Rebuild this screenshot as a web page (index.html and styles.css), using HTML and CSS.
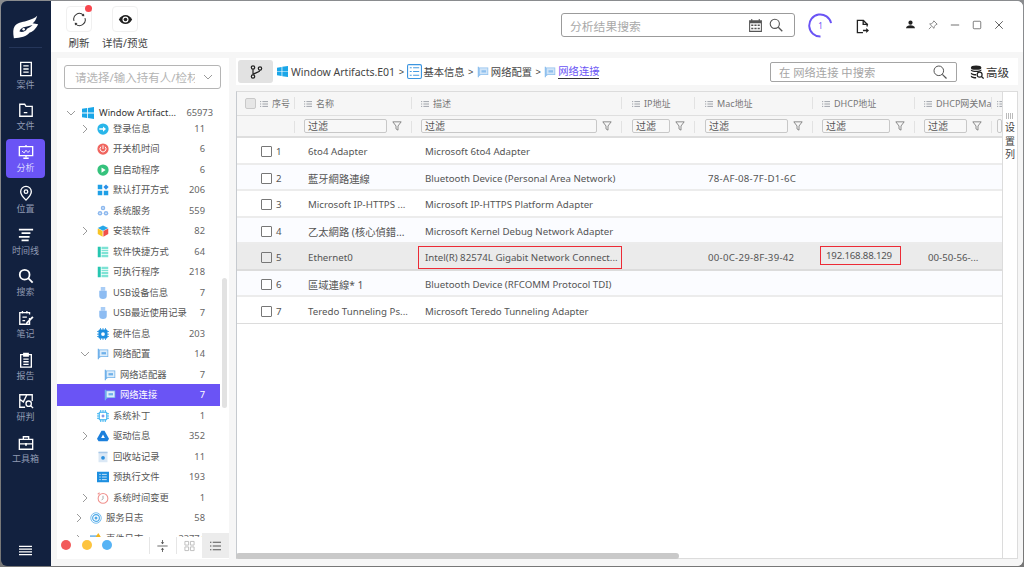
FILE: index.html
```html
<!DOCTYPE html>
<html lang="zh">
<head>
<meta charset="utf-8">
<title>分析</title>
<link rel="stylesheet" href="styles.css">
</head>
<body>
<svg class="defs" width="0" height="0">
<symbol id="win" viewBox="0 0 12 12"><path fill="#1aa6e8" d="M0 1.800 5 1v4.600H0zM5.800.9 12 0v5.600H5.800zM0 6.400h5V11l-5-.8zM5.800 6.400H12V12l-6.200-.9z"/></symbol>
<symbol id="net" viewBox="0 0 16 16"><path fill="#6fb1ea" d="M1 1h1.600v1H15v10H5l-2.400 1.600V15H1z"/><path fill="#dcecfa" d="M3.600 3H14v8H3.600z"/><path fill="#6fb1ea" d="M6 5.500h6v3H6z"/></symbol>
<symbol id="list" viewBox="0 0 16 16"><path fill="#26c6b0" d="M1 1h4v14H1z"/><path fill="#7fe3d5" d="M6 1h9v3H6zM6 5h9v2H6zM6 8h9v3H6zM6 12h9v3H6z"/></symbol>
<symbol id="usb" viewBox="0 0 16 16"><path fill="#a9cdf6" d="M5 0h6v5H5z"/><path fill="#8dbcf2" d="M3 5h10v7a5 4 0 0 1-10 0z"/></symbol>
<symbol id="chev-r" viewBox="0 0 10 10"><path fill="none" stroke="#9a9a9a" d="m3 1 4 4-4 4"/></symbol>
<symbol id="chev-d" viewBox="0 0 10 10"><path fill="none" stroke="#9a9a9a" d="m1 3 4 4 4-4"/></symbol>
<symbol id="lines" viewBox="0 0 10 10"><path fill="none" stroke="#8a8f98" d="M0 2h1.500M3 2h7M0 5h1.500M3 5h7M0 8h1.500M3 8h7"/></symbol>
<symbol id="funnel" viewBox="0 0 12 12"><path fill="none" stroke="#777" d="M1 1h10L7.200 6v5L4.800 9.500V6z"/></symbol>
<symbol id="flagsm" viewBox="0 0 16 16"><path fill="#8fc0ee" d="M1 1h1.600v1H15v10H5l-2.400 1.600V15H1z"/><path fill="#cfe4f8" d="M3.600 3H14v8H3.600z"/><path fill="#8fc0ee" d="M6 5.500h6v3H6z"/></symbol>
</svg>
<div class="app">
  <nav class="rail">
    <svg class="logo" viewBox="0 0 30 30"><path fill="#fff" d="M2 28C1 22 1 18 3 15 7 10 13 11 17 9c4-1 8-3 10-5-1 4-3 7-5 8 2 0 4 1 6 1-3 6-6 8-9 9-3 4-10 6-17 6z"/><path fill="#12213f" d="M8 21c1-4 5-5 8-5.500l6-1.500c-2 2-4 3-6 4-1 3-5 4-8 3z"/><circle cx="12.500" cy="18.500" r="1.400" fill="#fff"/></svg>
    <div class="rail-sep"></div>
    <a class="rail-item"><svg viewBox="0 0 18 18"><path fill="none" stroke="#fff" stroke-width="1.500" d="M3 1.500h12v15H3zM6 5.500h6M6 9h6M6 12.500h6"/></svg><span>案件</span></a>
    <a class="rail-item"><svg viewBox="0 0 18 18"><path fill="none" stroke="#fff" stroke-width="1.500" d="M2 2.500h5.500l1.500 2.500h7v11H2zM6.500 12h4"/></svg><span>文件</span></a>
    <a class="rail-item active"><svg viewBox="0 0 18 18"><path fill="none" stroke="#fff" stroke-width="1.500" d="M1.500 3h15v10h-15zM9 1v2M9 13v2M6 16h6"/><path fill="none" stroke="#fff" d="m4.500 8 2.500 2 2-3 2 2.500 2.500-2"/></svg><span>分析</span></a>
    <a class="rail-item"><svg viewBox="0 0 18 18"><path fill="none" stroke="#fff" stroke-width="1.500" d="M9 17c-3-3-6-6-6-9.500a6 6 0 0 1 12 0C15 11 12 14 9 17z"/><circle cx="9" cy="7.500" r="2" fill="none" stroke="#fff" stroke-width="1.500"/></svg><span>位置</span></a>
    <a class="rail-item"><svg viewBox="0 0 18 18"><path fill="none" stroke="#fff" stroke-width="2" d="M1 3h16M4 7h10M1 11h12M4 15h8"/></svg><span>时间线</span></a>
    <a class="rail-item"><svg viewBox="0 0 18 18"><circle cx="7.500" cy="7.500" r="5.500" fill="none" stroke="#fff" stroke-width="2"/><path stroke="#fff" stroke-width="2" d="m11.500 11.500 5 5"/></svg><span>搜索</span></a>
    <a class="rail-item"><svg viewBox="0 0 18 18"><path fill="none" stroke="#fff" stroke-width="1.500" d="M13 9v7H2V3h11v2M5 1v3M10 1v3M5 8h5M5 12h3"/><path fill="#fff" d="m9 14 7-7 1.500 1.500-7 7L9 16z"/></svg><span>笔记</span></a>
    <a class="rail-item"><svg viewBox="0 0 18 18"><path fill="none" stroke="#fff" stroke-width="1.500" d="M3 3h12v14H3zM6.500 1.500h5v3h-5zM6 8h6M6 11h6M6 14h6"/></svg><span>报告</span></a>
    <a class="rail-item"><svg viewBox="0 0 18 18"><path fill="none" stroke="#fff" stroke-width="1.500" d="M8 16H2V2h14v7M2 7l4 3 4-8"/><circle cx="12" cy="12" r="3" fill="none" stroke="#fff" stroke-width="1.500"/><path stroke="#fff" stroke-width="1.500" d="m14 14 3 3"/></svg><span>研判</span></a>
    <a class="rail-item"><svg viewBox="0 0 18 18"><path fill="none" stroke="#fff" stroke-width="1.500" d="M1.500 5h15v11h-15zM6 5V2h6v3M1.500 10h15"/><path stroke="#fff" stroke-width="2" d="M9 9v3"/></svg><span>工具箱</span></a>
    <svg class="rail-menu" viewBox="0 0 14 11"><path stroke="#fff" stroke-width="1.400" d="M0 1h14M0 4h14M0 7h14M0 10h14"/></svg>
  </nav>
  <div class="main">
    <header class="topbar">
      <div class="tool">
        <span class="tool-btn has-dot"><svg viewBox="0 0 16 16"><path fill="none" stroke="#333" stroke-width="1.100" d="M2.200 9.500A6 6 0 0 1 12 3.200M13.800 6.500A6 6 0 0 1 4 12.800"/><path fill="#333" d="m12.800 1.500.3 3-3-.2zM3.200 14.500l-.3-3 3 .2z"/></svg></span>
        <span class="tool-label">刷新</span>
      </div>
      <div class="tool">
        <span class="tool-btn"><svg viewBox="0 0 18 18"><path fill="#222" d="M1 9c2-3.700 4.800-5.500 8-5.500s6 1.800 8 5.500c-2 3.700-4.800 5.500-8 5.500S3 12.700 1 9z"/><circle cx="9" cy="9" r="3.600" fill="#fff"/><circle cx="9" cy="9" r="2.200" fill="#222"/></svg></span>
        <span class="tool-label">详情/预览</span>
      </div>
      <div class="spacer"></div>
      <label class="global-search">
        <span class="gs-text">分析结果搜索</span>
        <svg class="gs-cal" viewBox="0 0 14 14"><path fill="#555" d="M1 2h2V1h1v1h6V1h1v1h2v11H1z"/><path fill="#fff" d="M2 5h10v7H2z"/><path fill="#555" d="M3 6h2v1.500H3zM6 6h2v1.500H6zM9 6h2v1.500H9zM3 9h2v1.500H3zM6 9h2v1.500H6zM9 9h2v1.500H9z"/></svg>
        <svg class="gs-glass" viewBox="0 0 14 14"><circle cx="5.800" cy="5.800" r="4.600" fill="none" stroke="#555" stroke-width="1.100"/><path stroke="#555" stroke-width="1.300" d="m9.300 9.300 4 4"/></svg>
      </label>
      <div class="progress">
        <svg viewBox="0 0 26 26"><path fill="none" stroke="#6a54f5" stroke-width="2" d="M24 10.500A11.500 11.500 0 1 0 13 24.500"/></svg>
        <span>1</span>
      </div>
      <svg class="export" viewBox="0 0 14 16"><path fill="none" stroke="#222" stroke-width="1.400" d="M7.500 14.500H1.500v-13h6.500l4 4V8"/><path fill="#222" d="M7 1h1.500v4H13v1.500H7zM7.500 11.500H11V9.500l3 2.800-3 2.700v-2H7.500z"/></svg>
      <svg class="win-ic user" viewBox="0 0 12 12"><circle cx="6" cy="3.500" r="2.800" fill="#222"/><path fill="#222" d="M0 11c.5-3 3-4 6-4s5.500 1 6 4z"/></svg>
      <svg class="win-ic pin" viewBox="0 0 12 12"><path fill="none" stroke="#666" stroke-width=".9" d="m7 1 4 4-1.500.5L7.500 8l-.3 2L2 4.800l2-.3 2.500-2zM4 8l-3 3"/></svg>
      <svg class="win-ic min" viewBox="0 0 12 12"><path stroke="#555" d="M1 6h10"/></svg>
      <svg class="win-ic max" viewBox="0 0 12 12"><rect x="1.500" y="1.500" width="9" height="9" rx="1" fill="none" stroke="#666"/></svg>
      <svg class="win-ic close" viewBox="0 0 12 12"><path stroke="#444" d="m1.500 1.500 9 9M10.500 1.500l-9 9"/></svg>
    </header>
    <div class="content">
      <aside class="side">
        <div class="holder"><span class="holder-text">请选择/输入持有人/检材</span><svg viewBox="0 0 10 10"><use href="#chev-d"/></svg></div>
        <div class="tree">
          <div class="row l1"><svg class="arr"><use href="#chev-d"/></svg><svg class="ic"><use href="#win"/></svg><span class="nm root">Window Artifact...</span><span class="ct root-ct">65973</span></div>
          <div class="row l2"><svg class="arr"><use href="#chev-r"/></svg><svg class="ic" viewBox="0 0 16 16"><circle cx="8" cy="8" r="7.500" fill="#29b6ea"/><path fill="#fff" d="M3 7h5V4.500L12 8l-4 3.500V9H3z"/></svg><span class="nm">登录信息</span><span class="ct">11</span></div>
          <div class="row l2"><i class="arr"></i><svg class="ic" viewBox="0 0 16 16"><circle cx="8" cy="8" r="7.500" fill="#f0655f"/><path fill="none" stroke="#fff" stroke-width="1.300" d="M5.200 5a4 4 0 1 0 5.600 0M8 3v5"/></svg><span class="nm">开关机时间</span><span class="ct">6</span></div>
          <div class="row l2"><i class="arr"></i><svg class="ic" viewBox="0 0 16 16"><circle cx="8" cy="8" r="7.500" fill="#35c27c"/><path fill="#fff" d="M6 4.500 11.500 8 6 11.500z"/></svg><span class="nm">自启动程序</span><span class="ct">6</span></div>
          <div class="row l2"><i class="arr"></i><svg class="ic" viewBox="0 0 16 16"><path fill="#1d9fe6" d="M1 1h6v6H1zM1 9h6v6H1zM9 9h6v6H9z"/><path fill="#2c8fe8" d="m12 .5 3.500 3.500-3.500 3.500L8.500 4z"/></svg><span class="nm">默认打开方式</span><span class="ct">206</span></div>
          <div class="row l2"><i class="arr"></i><svg class="ic" viewBox="0 0 16 16"><g fill="#8cb8ee"><circle cx="8" cy="4" r="3"/><circle cx="4" cy="11" r="3"/><circle cx="12" cy="11" r="3"/></g><g fill="#fff"><circle cx="8" cy="4" r="1"/><circle cx="4" cy="11" r="1"/><circle cx="12" cy="11" r="1"/></g></svg><span class="nm">系统服务</span><span class="ct">559</span></div>
          <div class="row l2"><svg class="arr"><use href="#chev-r"/></svg><svg class="ic" viewBox="0 0 16 16"><path fill="#28a7e8" d="m8 .5 7 3.500L8 7.500 1 4z"/><path fill="#f7c325" d="M1 4.500 7.500 8v7.500L1 12z"/><path fill="#f0504a" d="M15 4.500 8.500 8v7.500L15 12z"/></svg><span class="nm">安装软件</span><span class="ct">82</span></div>
          <div class="row l2"><i class="arr"></i><svg class="ic"><use href="#list"/></svg><span class="nm">软件快捷方式</span><span class="ct">64</span></div>
          <div class="row l2"><i class="arr"></i><svg class="ic"><use href="#list"/></svg><span class="nm">可执行程序</span><span class="ct">218</span></div>
          <div class="row l2"><i class="arr"></i><svg class="ic"><use href="#usb"/></svg><span class="nm">USB设备信息</span><span class="ct">7</span></div>
          <div class="row l2"><i class="arr"></i><svg class="ic"><use href="#usb"/></svg><span class="nm">USB最近使用记录</span><span class="ct">7</span></div>
          <div class="row l2"><i class="arr"></i><svg class="ic" viewBox="0 0 16 16"><path fill="#1d8fe0" d="M3 2h10l1 1v10l-1 1H3l-1-1V3zM4 0h1v2H4zM7.500 0h1v2h-1zM11 0h1v2h-1zM4 14h1v2H4zM7.500 14h1v2h-1zM11 14h1v2h-1zM0 4h2v1H0zM0 7.500h2v1H0zM0 11h2v1H0zM14 4h2v1h-2zM14 7.500h2v1h-2zM14 11h2v1h-2z"/><circle cx="8" cy="8" r="2.500" fill="#fff"/></svg><span class="nm">硬件信息</span><span class="ct">203</span></div>
          <div class="row l2"><svg class="arr"><use href="#chev-d"/></svg><svg class="ic"><use href="#net"/></svg><span class="nm">网络配置</span><span class="ct">14</span></div>
          <div class="row l3"><i class="arr"></i><svg class="ic"><use href="#net"/></svg><span class="nm">网络适配器</span><span class="ct">7</span></div>
          <div class="row l3 selected"><i class="arr"></i><svg class="ic"><use href="#net"/></svg><span class="nm">网络连接</span><span class="ct">7</span></div>
          <div class="row l2"><i class="arr"></i><svg class="ic" viewBox="0 0 16 16"><path fill="none" stroke="#1fa8ee" stroke-width="1.200" d="M3 3h10v10H3zM5 0v3M8 0v3M11 0v3M5 13v3M8 13v3M11 13v3M0 5h3M0 8h3M0 11h3M13 5h3M13 8h3M13 11h3"/><path stroke="#3457d5" d="M8 6v4M6 8h4"/></svg><span class="nm">系统补丁</span><span class="ct">1</span></div>
          <div class="row l2"><svg class="arr"><use href="#chev-r"/></svg><svg class="ic" viewBox="0 0 16 16"><path fill="#1b7fdc" d="M6 1h4l6 10.500L14 15H2L0 11.500z"/><path fill="#fff" d="m8 6 2.500 4.500h-5z"/></svg><span class="nm">驱动信息</span><span class="ct">352</span></div>
          <div class="row l2"><i class="arr"></i><svg class="ic" viewBox="0 0 16 16"><path fill="#dbe8f5" d="M2 1h12v14H2z"/><path fill="#a8c8e8" d="M2 1h12v2H2z"/><circle cx="8" cy="9" r="2.500" fill="#2d8fdd"/></svg><span class="nm">回收站记录</span><span class="ct">11</span></div>
          <div class="row l2"><i class="arr"></i><svg class="ic" viewBox="0 0 16 16"><path fill="#1d8fe0" d="M0 1h16v14H0z"/><path stroke="#fff" d="M3 4.500h2M6.500 4.500h6.500M3 8h2M6.500 8h6.500M3 11.500h2M6.500 11.500h6.500"/></svg><span class="nm">预执行文件</span><span class="ct">193</span></div>
          <div class="row l2"><svg class="arr"><use href="#chev-r"/></svg><svg class="ic clock" viewBox="0 0 16 16"><circle cx="8" cy="8.500" r="6.500" fill="none" stroke="#f0918d" stroke-width="1.400"/><path fill="none" stroke="#888" d="M8 5v4l-2 2"/><path stroke="#f0918d" stroke-width="1.400" d="m1 3 2.500-2"/></svg><span class="nm">系统时间变更</span><span class="ct">1</span></div>
          <div class="row l1b"><svg class="arr"><use href="#chev-r"/></svg><svg class="ic" viewBox="0 0 16 16"><g fill="none" stroke="#4ea9e8"><circle cx="8" cy="8" r="7"/><circle cx="8" cy="8" r="4.500" stroke-width="1.500"/></g><circle cx="8" cy="8" r="2" fill="#4ea9e8"/></svg><span class="nm">服务日志</span><span class="ct">58</span></div>
          <div class="row l1b"><svg class="arr"><use href="#chev-r"/></svg><svg class="ic" viewBox="0 0 16 16"><path fill="#7dbcec" d="M0 3h13v10H0z"/><path fill="#f3b41b" d="m11 0 4.500 7h-9z"/></svg><span class="nm">事件日志</span><span class="ct">33774</span></div>
        </div>
        <div class="thumb"></div>
        <div class="side-foot">
          <i class="dot red"></i><i class="dot yellow"></i><i class="dot blue"></i>
          <span class="foot-btn sep"><svg viewBox="0 0 12 14"><path fill="none" stroke="#555" d="M0 7h12M6 0v4M6 10v4"/><path fill="#555" d="m4 2.500 2 2.500 2-2.500zM4 11.500 6 9l2 2.500z"/></svg></span>
          <span class="foot-btn sep"><svg viewBox="0 0 12 12"><path fill="none" stroke="#bbb" d="M1 1h4v4H1zM7 1h4v4H7zM1 7h4v4H1zM7 7h4v4H7z"/></svg></span>
          <span class="foot-btn on"><svg viewBox="0 0 12 10"><path stroke="#555" stroke-width="1.100" d="M0 1h1.500M3 1h9M0 5h1.500M3 5h9M0 9h1.500M3 9h9"/></svg></span>
        </div>
      </aside>
      <section class="panel">
        <div class="crumbs">
          <span class="branch"><svg viewBox="0 0 14 14"><circle cx="4" cy="2.500" r="1.700" fill="none" stroke="#222" stroke-width="1.200"/><circle cx="4" cy="11.500" r="1.700" fill="none" stroke="#222" stroke-width="1.200"/><circle cx="11" cy="3.500" r="1.700" fill="none" stroke="#222" stroke-width="1.200"/><path fill="none" stroke="#222" stroke-width="1.200" d="M4 4.200v5.600M11 5.200C11 7.500 6 7 4.500 9.500"/></svg></span>
          <svg class="cr-win"><use href="#win"/></svg><span class="cr-text">Window Artifacts.E01</span><span class="cr-sep">&gt;</span>
          <svg class="cr-box" viewBox="0 0 16 16"><rect x=".6" y=".6" width="14.800" height="14.800" rx="1.500" fill="none" stroke="#3b95e0" stroke-width="1.200"/><path stroke="#3b95e0" d="M3 4h2M6.500 4H13M3 8h2M6.500 8H13M3 12h2M6.500 12H13"/></svg><span class="cr-text cjk">基本信息</span><span class="cr-sep">&gt;</span>
          <svg class="cr-net"><use href="#flagsm"/></svg><span class="cr-text cjk">网络配置</span><span class="cr-sep">&gt;</span>
          <svg class="cr-net"><use href="#flagsm"/></svg><span class="cr-current">网络连接</span>
          <span class="spacer"></span>
          <label class="panel-search"><span>在 网络连接 中搜索</span><svg viewBox="0 0 14 14"><circle cx="5.800" cy="5.800" r="4.800" fill="none" stroke="#555"/><path stroke="#555" stroke-width="1.200" d="m9.300 9.300 4.200 4.200"/></svg></label>
          <span class="adv"><svg viewBox="0 0 16 16"><ellipse cx="7" cy="3" rx="6" ry="2.500" fill="#222"/><path fill="#222" d="M1 5c2 2 10 2 12 0v1.500C11 8.500 3 8.500 1 6.500zM1 8.500c1.500 1.300 4 1.800 6 1.700v1.800c-2 0-4.500-.5-6-1.800zM1 12c1.500 1.300 4 1.800 6 1.800v1.700c-2 0-4.500-.5-6-1.800z"/><circle cx="11" cy="11" r="2.800" fill="none" stroke="#222" stroke-width="1.400"/><path stroke="#222" stroke-width="1.500" d="m13 13 2.500 2.500"/></svg>高级</span>
        </div>
        <div class="grid-wrap">
          <div class="grid">
            <div class="gh">
              <div class="c c0"><i class="chk"></i><svg class="ln"><use href="#lines"/></svg>序号</div>
              <div class="c c1"><svg class="ln"><use href="#lines"/></svg>名称</div>
              <div class="c c2"><svg class="ln"><use href="#lines"/></svg>描述</div>
              <div class="c c3"><svg class="ln"><use href="#lines"/></svg>IP地址</div>
              <div class="c c4"><svg class="ln"><use href="#lines"/></svg>Mac地址</div>
              <div class="c c5"><svg class="ln"><use href="#lines"/></svg>DHCP地址</div>
              <div class="c c6"><svg class="ln"><use href="#lines"/></svg><span class="clip">DHCP网关Mac</span></div>
              <div class="c c7"><svg class="ln"><use href="#lines"/></svg></div>
            </div>
            <div class="gf">
              <div class="c c0"></div>
              <div class="c c1"><span class="flt">过滤</span><svg class="fn"><use href="#funnel"/></svg></div>
              <div class="c c2"><span class="flt">过滤</span><svg class="fn"><use href="#funnel"/></svg></div>
              <div class="c c3"><span class="flt">过滤</span><svg class="fn"><use href="#funnel"/></svg></div>
              <div class="c c4"><span class="flt">过滤</span><svg class="fn"><use href="#funnel"/></svg></div>
              <div class="c c5"><span class="flt">过滤</span><svg class="fn"><use href="#funnel"/></svg></div>
              <div class="c c6"><span class="flt">过滤</span><svg class="fn"><use href="#funnel"/></svg></div>
              <div class="c c7"><span class="flt"></span></div>
            </div>
            <div class="gr"><div class="c c0"><i class="chk sq"></i>1</div><div class="c c1">6to4 Adapter</div><div class="c c2">Microsoft 6to4 Adapter</div><div class="c c3"></div><div class="c c4"></div><div class="c c5"></div><div class="c c6"></div></div>
            <div class="gr alt"><div class="c c0"><i class="chk sq"></i>2</div><div class="c c1 zh">藍牙網路連線</div><div class="c c2">Bluetooth Device (Personal Area Network)</div><div class="c c3"></div><div class="c c4">78-AF-08-7F-D1-6C</div><div class="c c5"></div><div class="c c6"></div></div>
            <div class="gr"><div class="c c0"><i class="chk sq"></i>3</div><div class="c c1">Microsoft IP-HTTPS ...</div><div class="c c2">Microsoft IP-HTTPS Platform Adapter</div><div class="c c3"></div><div class="c c4"></div><div class="c c5"></div><div class="c c6"></div></div>
            <div class="gr alt"><div class="c c0"><i class="chk sq"></i>4</div><div class="c c1 zh">乙太網路 (核心偵錯...</div><div class="c c2">Microsoft Kernel Debug Network Adapter</div><div class="c c3"></div><div class="c c4"></div><div class="c c5"></div><div class="c c6"></div></div>
            <div class="gr hot"><div class="c c0"><i class="chk sq"></i>5</div><div class="c c1">Ethernet0</div><div class="c c2 mark">Intel(R) 82574L Gigabit Network Connect...</div><div class="c c3"></div><div class="c c4">00-0C-29-8F-39-42</div><div class="c c5 mark">192.168.88.129</div><div class="c c6">00-50-56-...</div></div>
            <div class="gr alt"><div class="c c0"><i class="chk sq"></i>6</div><div class="c c1 zh">區域連線* 1</div><div class="c c2">Bluetooth Device (RFCOMM Protocol TDI)</div><div class="c c3"></div><div class="c c4"></div><div class="c c5"></div><div class="c c6"></div></div>
            <div class="gr"><div class="c c0"><i class="chk sq"></i>7</div><div class="c c1">Teredo Tunneling Ps...</div><div class="c c2">Microsoft Teredo Tunneling Adapter</div><div class="c c3"></div><div class="c c4"></div><div class="c c5"></div><div class="c c6"></div></div>
          </div>
          <div class="col-tab"><span class="col-grip"></span><span>设</span><span>置</span><span>列</span></div>
        </div>
        <div class="hscroll"><div class="hthumb"></div></div>
      </section>
    </div>
  </div>
</div>
</body>
</html>
```
FILE: styles.css
```css
* { box-sizing: border-box; }
html, body { margin: 0; height: 100%; overflow: hidden; background: #6b6b6b; }
body { font-family: "Noto Sans", "Noto Sans CJK SC", sans-serif; font-size: 10px; color: #444; }
.defs { position: absolute; }
.app { width: 1024px; height: 567px; display: flex; padding: 1px; background: linear-gradient(#8a8c8f, #777); }
.rail { width: 50px; flex: none; background: #12213f; border-radius: 6px 0 0 6px; display: flex; flex-direction: column; align-items: center; padding: 11px 1px 0 0; }
.logo { width: 28px; height: 28px; flex: none; }
.rail-sep { width: 33px; height: 1px; background: #25365a; margin: 7px 0 8px; flex: none; }
.rail-item { width: 39px; height: 39px; margin-bottom: 2.600px; border-radius: 4px; display: flex; flex: none; flex-direction: column; align-items: center; justify-content: center; color: #8f9ab2; font-size: 9px; line-height: 12px; white-space: nowrap; }
.rail-item svg { width: 16px; height: 16px; margin-bottom: 2px; }
.rail-item.active { background: #6a54f5; color: #d9d5ff; }
.rail-menu { width: 13px; height: 11px; margin-top: auto; margin-bottom: 10px; }
.main { flex: 1; min-width: 0; background: #fff; display: flex; flex-direction: column; border-radius: 0 6px 6px 0; overflow: hidden; }
.topbar { height: 51px; flex: none; display: flex; align-items: flex-start; background: #fff; padding-left: 5px; position: relative; }
.tool { width: 46px; display: flex; flex-direction: column; align-items: center; margin-top: 5px; }
.tool-btn { width: 26px; height: 26px; border: 1px solid #f0f0f0; border-radius: 4px; display: flex; align-items: center; justify-content: center; position: relative; }
.tool-btn svg { width: 15px; height: 15px; }
.tool-btn.has-dot::after { content: ""; position: absolute; right: -1px; top: -2px; width: 7px; height: 7px; border-radius: 50%; background: #f8474f; }
.tool-btn + .tool-label { margin-top: 4px; }
.tool-label { font-size: 10.500px; line-height: 14px; color: #444; white-space: nowrap; }
.spacer { flex: 1; }
.global-search { width: 234px; height: 24px; margin-top: 12px; border: 1px solid #9b9b9b; border-radius: 3px; display: flex; align-items: center; padding: 0 11px 0 8px; }
.gs-text { flex: 1; font-size: 11.800px; color: #a9a9a9; }
.gs-cal { width: 15px; height: 15px; margin-right: 6px; }
.gs-glass { width: 14px; height: 14px; }
.progress { width: 25px; height: 25px; margin: 12px 0 0 13px; position: relative; display: flex; align-items: center; justify-content: center; color: #6a54f5; font-size: 8px; }
.progress svg { position: absolute; inset: 0; }
.export { width: 13px; height: 15px; margin: 18px 37px 0 23px; flex: none; }
.win-ic { width: 10px; height: 10px; margin-top: 19px; flex: none; }
.user { width: 9px; height: 9px; margin-right: 13px; }
.pin { margin-right: 12px; }
.min { margin-right: 12px; }
.max { margin-right: 12px; }
.close { margin-right: 19px; }
.content { flex: 1; min-height: 0; display: flex; background: #f6f6f6; padding: 6px 0 7px; }
.side { width: 172px; margin-left: 6px; background: #fff; flex: none; position: relative; overflow: hidden; }
.holder { margin: 7px 8px 0 7px; height: 24px; border: 1px solid #b5b5b5; border-radius: 3px; display: flex; align-items: center; padding: 0 7px 0 10px; font-size: 11.500px; color: #b4b4b4; }
.holder-text { flex: 1; overflow: hidden; white-space: nowrap; width: 0; }
.holder svg { width: 10px; height: 10px; margin-left: 8px; flex: none; }
.tree { margin-top: 18.750px; padding-right: 12px; }
.row { height: 20.500px; display: flex; align-items: center; font-size: 9.300px; color: #555; line-height: 14px; white-space: nowrap; position: relative; }
.row.l1 { height: 10.500px; }
.arr { width: 10px; height: 10px; flex: none; margin-right: 7px; display: block; }
.ic { width: 12px; height: 12px; flex: none; margin-right: 4px; }
.l1 { padding-left: 9px; }
.l1 .ic { margin-right: 5px; }
.l1 .arr { margin-right: 6px; }
.l2 { padding-left: 23px; }
.l1b { padding-left: 17px; }
.l1b .arr { margin-right: 6px; }
.l3 { padding-left: 47px; }
.l3 .arr { width: 0; margin: 0; }
.nm { flex: 1; }
.root { color: #333; }
.ct { margin-right: 12px; color: #666; }
.root-ct { margin-right: 4px; }
.row.selected { background: #6a54f5; color: #fff; margin: -.75px -3px -.75px 0; padding-right: 3px; height: 22px; }
.selected .ct { color: #fff; }
.thumb { position: absolute; right: 2px; top: 220px; width: 5px; height: 130px; background: #e2e2e2; border-radius: 3px; }
.side-foot { position: absolute; left: 0; right: 0; bottom: 0; height: 22px; display: flex; align-items: flex-start; padding-left: 4px; background: #fff; }
.dot { width: 10px; height: 10px; border-radius: 50%; margin: 3px 10.500px 0 0; flex: none; }
.red { background: #f25a5a; }
.yellow { background: #fdc43f; }
.blue { background: #56b3f5; }
.foot-btn { width: 26.500px; height: 17px; display: flex; align-items: center; justify-content: center; flex: none; }
.foot-btn.sep { border-left: 1px solid #e6e6e6; }
.foot-btn:first-of-type { margin-left: 26.500px; }
.foot-btn svg { width: 11px; height: 12px; }
.foot-btn.on { background: #ececec; margin-top: -4px; height: 25px; border-left: 0; }
.panel { flex: 1; min-width: 0; margin-left: 7px; margin-right: 5px; display: flex; flex-direction: column; position: relative; }
.crumbs { height: 27px; display: flex; align-items: center; background: #fff; flex: none; padding-right: 6px; }
.branch { width: 35px; height: 23px; background: #e2e2e2; border-radius: 3px; margin: 0 4px 0 2px; display: flex; align-items: center; justify-content: center; flex: none; }
.branch svg { width: 14px; height: 14px; }
.cr-win { width: 11px; height: 11px; margin-right: 3px; flex: none; }
.cr-text { font-size: 10.500px; color: #444; white-space: nowrap; }
.cjk { font-size: 10.300px; }
.cr-sep { font-size: 9px; margin: 0 3.500px; color: #444; font-family: "Liberation Sans", sans-serif; }
.cr-box { width: 15px; height: 15px; margin-right: 1px; flex: none; }
.cr-net { width: 12px; height: 12px; margin-right: 2px; flex: none; }
.cr-current { color: #6a54f5; font-size: 10.300px; border-bottom: 1px solid #333; line-height: 13px; margin-top: 1px; white-space: nowrap; }
.panel-search { width: 187px; height: 20px; border: 1px solid #a4a4a4; border-radius: 2px; display: flex; align-items: center; padding: 0 9px 0 8px; color: #a5a5a5; font-size: 11.300px; justify-content: space-between; white-space: nowrap; flex: none; }
.panel-search svg { width: 14px; height: 14px; }
.adv { display: flex; align-items: center; margin-left: 13px; color: #333; font-size: 11.500px; gap: 2px; white-space: nowrap; width: 42px; flex: none; }
.adv svg { width: 14px; height: 14px; flex: none; }
.grid-wrap { margin-top: 6px; flex: 1; min-height: 0; border: 1px solid #dcdcdc; border-left-color: #c6cacf; display: flex; position: relative; background: #fff; overflow: hidden; }
.grid { width: 765px; flex: none; overflow: hidden; }
.gh, .gf, .gr { display: grid; grid-template-columns: 58px 117px 210px 73px 118px 102px 77px 10px; }
.gh { height: 24px; background: #f6f6f6; border-bottom: 1px solid #dfdfdf; font-size: 9px; color: #777; }
.gf { height: 22px; background: #f6f6f6; border-bottom: 2px solid #dedede; }
.gr { height: 26.500px; font-size: 9.700px; color: #555; background: #fff; width: 765px; border-bottom: 2px solid #ececec; }
.gr:last-child { border-bottom-width: 1px; border-bottom-color: #dcdcdc; }
.gr.alt { background: #fbfcff; }
.gr.hot { background: #ebebeb; border-bottom-color: #dcdcdc; }
.c { min-width: 0; display: flex; align-items: center; white-space: nowrap; overflow: hidden; padding-left: 9px; position: relative; }
.gh .c:not(:last-child)::after, .gf .c:not(:last-child)::after { content: ""; position: absolute; right: 0; top: 5px; height: 12px; width: 1px; background: #e2e2e2; }
.gh .c0 { padding-left: 8px; }
.gh .c3, .gh .c4, .gf .c3, .gf .c4 { padding-left: 10px; }
.gh .c7, .gf .c7 { padding-left: 5px; }
.gr .c { padding-top: 3px; padding-left: 13px; }
.gr .c0 { padding-left: 24px; }
.gr .c4 { letter-spacing: .25px; }
.zh { font-size: 10.300px; }
.ln { width: 8px; height: 8px; margin-right: 4px; flex: none; }
.chk { width: 11px; height: 11px; border: 1px solid #c9c9c9; background: #e6e6e6; border-radius: 2px; margin-right: 4px; flex: none; }
.chk.sq { background: #fff; border-color: #777; border-radius: 1px; }
.hot .chk.sq { background: #ebebeb; }
.flt { flex: 1; min-width: 0; height: 14px; border: 1px solid #c8c8c8; border-radius: 2px; background: #f8f8f8; font-size: 10px; line-height: 12px; padding-left: 3px; color: #555; }
.fn { width: 10px; height: 10px; margin: 0 10px 0 5px; flex: none; }
.clip { overflow: hidden; }
.gr .c2.mark { border: 1px solid #ec2b36; margin: 2px 0 0 6px; padding: 1px 0 0 6px; }
.gr .c5.mark { border: 1px solid #ec2b36; margin: 2px 14px 4px 7px; padding: 1px 0 0 5px; letter-spacing: -.2px; }
.col-tab { width: 15px; flex: none; border-left: 1px solid #dcdcdc; display: flex; flex-direction: column; align-items: center; font-size: 10px; line-height: 13.500px; color: #444; background: #fff; padding-top: 21px; }
.col-grip { width: 8px; height: 6px; background: repeating-linear-gradient(90deg, #bbb 0 1px, transparent 1px 2px); margin-bottom: 2px; flex: none; }
.hscroll { position: absolute; left: 0; bottom: 0; height: 6px; }
.hthumb { width: 443px; height: 6px; background: #c9c9c9; border-radius: 3px; }
```
